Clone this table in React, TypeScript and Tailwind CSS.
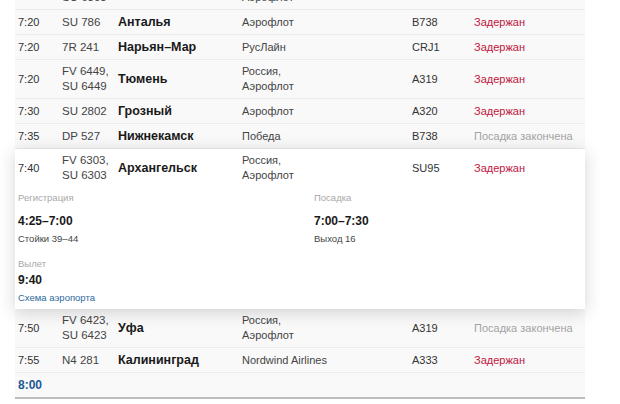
import React from "react";

type Row = {
  time: string;
  flight: string[];
  city: string;
  airline: string[];
  plane: string;
  status: string;
  late: boolean;
};

const rows: Row[] = [
  { time: "7:20", flight: ["SU 786"], city: "Анталья", airline: ["Аэрофлот"], plane: "B738", status: "Задержан", late: true },
  { time: "7:20", flight: ["7R 241"], city: "Нарьян–Мар", airline: ["РусЛайн"], plane: "CRJ1", status: "Задержан", late: true },
  { time: "7:20", flight: ["FV 6449,", "SU 6449"], city: "Тюмень", airline: ["Россия,", "Аэрофлот"], plane: "A319", status: "Задержан", late: true },
  { time: "7:30", flight: ["SU 2802"], city: "Грозный", airline: ["Аэрофлот"], plane: "A320", status: "Задержан", late: true },
  { time: "7:35", flight: ["DP 527"], city: "Нижнекамск", airline: ["Победа"], plane: "B738", status: "Посадка закончена", late: false },
];

const after: Row[] = [
  { time: "7:50", flight: ["FV 6423,", "SU 6423"], city: "Уфа", airline: ["Россия,", "Аэрофлот"], plane: "A319", status: "Посадка закончена", late: false },
  { time: "7:55", flight: ["N4 281"], city: "Калининград", airline: ["Nordwind Airlines"], plane: "A333", status: "Задержан", late: true },
];

function Cells({ r }: { r: Row }) {
  return (
    <>
      <div className="w-[47px] pl-[3px] text-[11px] text-[#333]">{r.time}</div>
      <div className="w-[56px] text-[11.5px] text-[#444]">
        {r.flight.map((f, i) => (
          <div key={i}>{f}</div>
        ))}
      </div>
      <div className="w-[124px] text-[12.5px] font-bold text-[#1a1a1a]">{r.city}</div>
      <div className="w-[170px] text-[11px] text-[#444]">
        {r.airline.map((f, i) => (
          <div key={i}>{f}</div>
        ))}
      </div>
      <div className="w-[62px] text-[11px] text-[#333]">{r.plane}</div>
      <div className={"text-[11px] " + (r.late ? "text-[#c0163f]" : "text-[#a3a3a3]")}>{r.status}</div>
    </>
  );
}

function FlightRow({ r }: { r: Row }) {
  return (
    <div className="flex min-h-[25px] items-center border-b border-[#ececec] bg-[#f9f9f9] py-1 leading-[15px]">
      <Cells r={r} />
    </div>
  );
}

export default function App() {
  return (
    <div
      className="h-[404px] w-[620px] overflow-hidden bg-white"
      style={{ fontFamily: '"Liberation Sans", Arial, sans-serif' }}
    >
      <div className="-mt-[29px] ml-[15px] w-[570px]">
        <FlightRow
          r={{ time: "7:15", flight: ["FV 6303,", "SU 6303"], city: "Сочи", airline: ["Россия,", "Аэрофлот"], plane: "A319", status: "Задержан", late: true }}
        />
        {rows.map((r, i) => (
          <FlightRow key={i} r={r} />
        ))}
        <div className="relative z-10 bg-white shadow-[0_3px_16px_rgba(0,0,0,0.17)]">
          <div className="flex min-h-[25px] items-center py-1 leading-[15px]">
            <Cells
              r={{ time: "7:40", flight: ["FV 6303,", "SU 6303"], city: "Архангельск", airline: ["Россия,", "Аэрофлот"], plane: "SU95", status: "Задержан", late: true }}
            />
          </div>
          <div className="pb-[5px] pl-[3px] pt-[5px]">
            <div className="flex">
              <div className="w-[296px]">
                <div className="text-[9.5px] leading-[12px] text-[#a8a8a8]">Регистрация</div>
                <div className="mt-[9px] text-[12px] font-bold leading-[16px] text-[#1a1a1a]">4:25–7:00</div>
                <div className="mt-[4px] text-[9.5px] leading-[12px] text-[#444]">Стойки 39–44</div>
              </div>
              <div>
                <div className="text-[9.5px] leading-[12px] text-[#a8a8a8]">Посадка</div>
                <div className="mt-[9px] text-[12px] font-bold leading-[16px] text-[#1a1a1a]">7:00–7:30</div>
                <div className="mt-[4px] text-[9.5px] leading-[12px] text-[#444]">Выход 16</div>
              </div>
            </div>
            <div className="mt-[13px] text-[9.5px] leading-[12px] text-[#a8a8a8]">Вылет</div>
            <div className="mt-[2px] text-[12px] font-bold leading-[16px] text-[#1a1a1a]">9:40</div>
            <div className="mt-[4px] text-[9.5px] leading-[12px] text-[#2d6aa0]">Схема аэропорта</div>
          </div>
        </div>
        {after.map((r, i) => (
          <FlightRow key={i} r={r} />
        ))}
        <div className="flex h-[26px] items-center border-b-2 border-[#bdbdbd] bg-[#f9f9f9] pl-[3px] text-[12px] font-bold text-[#1c5a96]">
          8:00
        </div>
      </div>
    </div>
  );
}
